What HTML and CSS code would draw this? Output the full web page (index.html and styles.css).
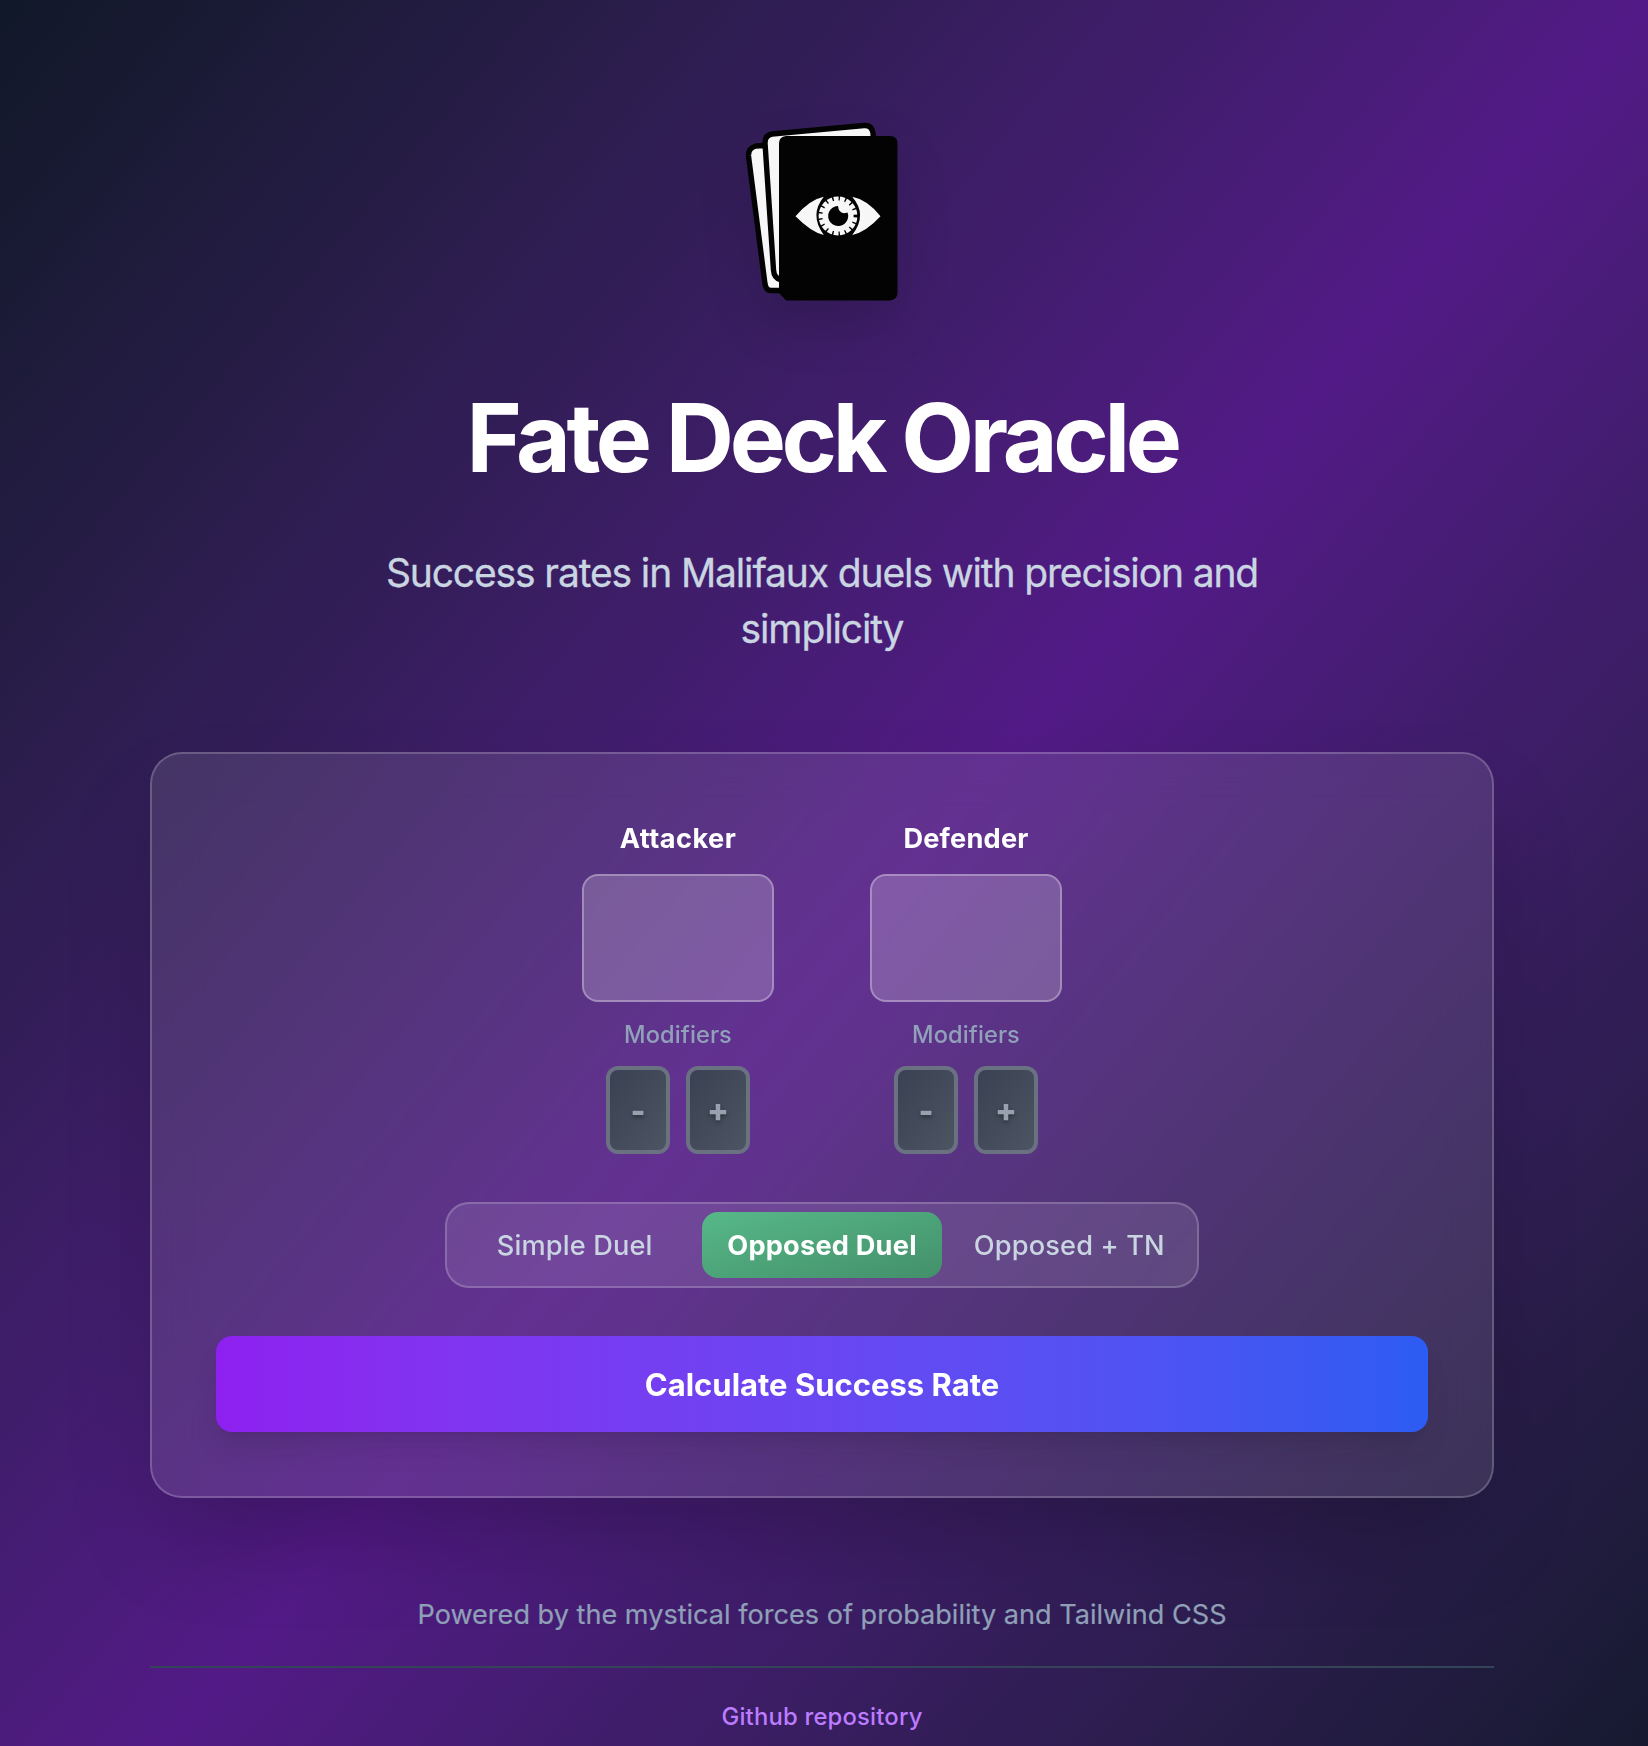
FILE: index.html
```html
<!DOCTYPE html>
<html lang="en">
<head>
<meta charset="utf-8">
<title>Fate Deck Oracle</title>
<link rel="stylesheet" href="styles.css">
</head>
<body>
<div class="page">
  <header class="hero">
    <svg class="logo" viewBox="2 0 200 220" width="200" height="220" aria-hidden="true">
      <g fill="#f7f7f7" stroke="#030303" stroke-width="5.4" stroke-linejoin="round">
        <path d="M44 45.500 L36 46 Q28 48 28.500 56 L45 184 Q46 190.500 51 190.500 L64 190.500 L80 160 L60 60 Z"/>
        <path d="M52 34 L144 25.500 Q152 25 153 33 L156 80 L80 180 L61 180 Q54 178 53.500 170 L45 43 Q45 35 52 34 Z"/>
      </g>
      <path fill="#030303" d="M66 36 H171 Q177.500 37 177.500 43 V193 Q177 200 170 200.500 H66 L59 193 V43 Q59 37 66 36 Z"/>
      <g fill="#f7f7f7">
        <path d="M75.500 116.200 Q90 99.500 103.800 96.800 Q89 115 103.800 135 Q91 132 75.500 116.200 Z"/>
        <path d="M160.500 116.200 Q147 99.500 132.200 96.800 Q148 115 132.200 135 Q146 132 160.500 116.200 Z"/>
        <circle cx="118" cy="116" r="19.400"/>
      </g>
      <circle cx="118" cy="116" r="17.800" fill="none" stroke="#030303" stroke-width="4.400" stroke-dasharray="1.400 5.057"/>
      <path fill="#030303" d="M118 106 Q118.500 113 124.500 113.200 L127.500 112.500 A10 10 0 1 1 118 106 Z"/>
    </svg>
    <h1 class="title">Fate Deck Oracle</h1>
    <p class="subtitle">Success rates in Malifaux duels with precision and<br>simplicity</p>
  </header>

  <main class="card">
    <div class="players">
      <section class="player">
        <label class="name name-attacker" for="attacker">Attacker</label>
        <input class="value" id="attacker" type="text">
        <span class="modifiers">Modifiers</span>
        <div class="chips"><button class="chip">-</button><button class="chip">+</button></div>
      </section>
      <section class="player">
        <label class="name" for="defender">Defender</label>
        <input class="value" id="defender" type="text">
        <span class="modifiers">Modifiers</span>
        <div class="chips"><button class="chip">-</button><button class="chip">+</button></div>
      </section>
    </div>
    <div class="modes">
      <button class="mode">Simple Duel</button>
      <button class="mode active">Opposed Duel</button>
      <button class="mode">Opposed + TN</button>
    </div>
    <button class="submit">Calculate Success Rate</button>
  </main>

  <footer class="footer">
    <p class="powered">Powered by the mystical forces of probability and Tailwind CSS</p>
    <div class="links"><a class="link" href="#">Github repository</a></div>
  </footer>
</div>
</body>
</html>
```
FILE: styles.css
```css
* { box-sizing: border-box; margin: 0; padding: 0; }
body { font-family: Inter, "Liberation Sans", sans-serif; color: #fff; }
button { font: inherit; color: inherit; border: 0; }

.page {
  height: 1746px;
  overflow: hidden;
  padding: 100px 154px 0 150px;
  background: linear-gradient(to bottom right in oklab, #101828, #521a86, #101828) 0 0 / 100% 1940px no-repeat;
}

.hero { display: flex; flex-direction: column; align-items: center; height: 652px; text-align: center; }
.logo { display: block; overflow: visible; filter: drop-shadow(0 25px 25px rgba(0, 0, 0, .12)); }
.title { margin-top: 70px; font-size: 94.5px; line-height: 96px; font-weight: 700; letter-spacing: -4.35px; white-space: nowrap; }
.subtitle { margin-top: 59px; font-size: 39px; line-height: 56px; letter-spacing: -1.13px; color: #cad5e2; white-space: nowrap; -webkit-text-stroke: .3px #cad5e2; }

.card {
  height: 746px;
  padding: 64px;
  border: 2px solid rgba(255, 255, 255, .2);
  border-radius: 32px;
  background: rgba(255, 255, 255, .1);
  backdrop-filter: blur(24px);
  box-shadow: 0 50px 100px -24px rgba(0, 0, 0, .25);
}
.players { display: flex; justify-content: center; gap: 96px; }
.player { display: flex; flex-direction: column; align-items: center; gap: 16px; width: 192px; }
.name { height: 40px; padding-top: 1px; font-size: 27.2px; line-height: 40px; font-weight: 650; letter-spacing: .2px; }
.name-attacker { letter-spacing: .45px; }
.value {
  width: 192px;
  height: 128px;
  border: 2px solid rgba(255, 255, 255, .3);
  border-radius: 16px;
  background: rgba(255, 255, 255, .2);
}
.modifiers { height: 32px; padding-top: 1px; font-size: 23.6px; line-height: 32px; font-weight: 540; letter-spacing: .1px; color: #90a1b9; }
.chips { display: flex; gap: 16px; }
.chip {
  width: 64px;
  height: 88px;
  padding-top: 1px;
  border: 4px solid #6a7282;
  border-radius: 12px;
  background: linear-gradient(to bottom right, #3a4152, #4c5562) padding-box;
  color: #99a1af;
  font-size: 32px;
  line-height: 40px;
  font-weight: 800;
  text-shadow: 0 2px 4px rgba(0, 0, 0, .4);
}

.modes {
  display: grid;
  grid-template-columns: repeat(3, 1fr);
  gap: 8px;
  width: 754px;
  height: 86px;
  margin: 48px auto;
  padding: 8px;
  border: 2px solid rgba(255, 255, 255, .2);
  border-radius: 24px;
  background: rgba(255, 255, 255, .1);
}
.mode { border-radius: 16px; background: none; color: #cad5e2; font-size: 27.2px; font-weight: 540; letter-spacing: .15px; white-space: nowrap; }
.mode.active { background: linear-gradient(to bottom right, #57b888, #43906a); color: #fff; font-weight: 650; letter-spacing: .2px; }

.submit {
  width: 100%;
  height: 96px;
  border-radius: 16px;
  background: linear-gradient(to right in oklab, #8e20f0, #2b5cf3);
  box-shadow: 0 20px 30px -6px rgba(0, 0, 0, .1), 0 8px 12px -8px rgba(0, 0, 0, .1);
  font-size: 31px;
  font-weight: 650;
}

.footer { padding-top: 97px; text-align: center; }
.powered { font-size: 27.1px; line-height: 40px; color: #90a1b9; white-space: nowrap; -webkit-text-stroke: .2px #90a1b9; }
.links { margin-top: 31px; padding-top: 33px; border-top: 2px solid #36445a; line-height: 32px; }
.link { color: #bb7cff; font-size: 23.8px; font-weight: 540; letter-spacing: .2px; text-decoration: none; }
```
